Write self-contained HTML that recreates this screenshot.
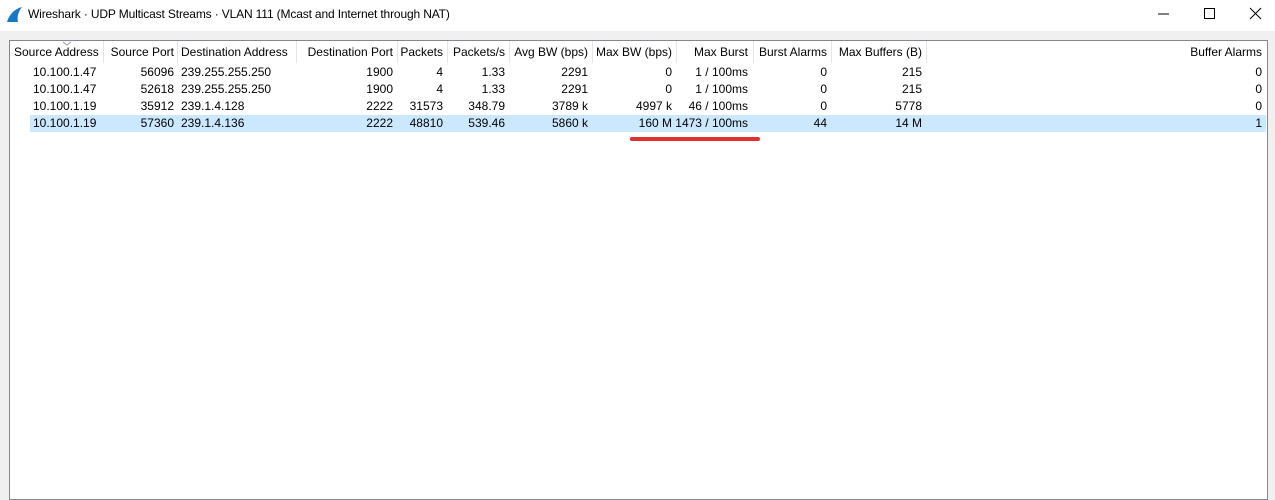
<!DOCTYPE html>
<html><head><style>
*{margin:0;padding:0;box-sizing:border-box}
body{width:1275px;height:475px;background:#f0f0f0;font-family:"Liberation Sans",sans-serif;font-size:12px;color:#000;position:relative;overflow:hidden}
#title{position:absolute;left:0;top:0;width:1275px;height:31px;background:#fff}
#title .t{position:absolute;left:28px;top:7px;font-size:12px;letter-spacing:-0.15px}
#box{position:absolute;left:9px;top:40px;width:1259px;height:460px;background:#fff;border:1px solid #828790}
.c{position:absolute;white-space:nowrap;line-height:17px}
.sep{position:absolute;top:0;width:1px;height:22px;background:#e5e5e5}
.r{text-align:right}
#sel{position:absolute;left:20px;top:74px;width:1236px;height:17px;background:#cce8ff}
</style></head><body>
<div id="title">
<svg style="position:absolute;left:6px;top:6px" width="18" height="18" viewBox="0 0 18 18"><path d="M1 16 C3 9 8 3 16 1 C12 6 11 11 12 16 Z" fill="#1679c4"/></svg>
<div class="t">Wireshark · UDP Multicast Streams · VLAN 111 (Mcast and Internet through NAT)</div>
<svg style="position:absolute;left:1155px;top:6px" width="110" height="16"><line x1="3" y1="8" x2="14" y2="8" stroke="#000"/><rect x="49.5" y="2.5" width="10" height="10" fill="none" stroke="#000"/><path d="M95 2 L106 13 M106 2 L95 13" stroke="#000"/></svg>
</div>
<div id="box">
<div id="sel"></div>
<svg style="position:absolute;left:52px;top:0" width="10" height="6"><path d="M1 1 L5 4 L9 1" stroke="#999" fill="none"/></svg>
<div class="sep" style="left:93px"></div><div class="sep" style="left:167px"></div><div class="sep" style="left:286px"></div><div class="sep" style="left:387px"></div><div class="sep" style="left:437px"></div><div class="sep" style="left:499px"></div><div class="sep" style="left:582px"></div><div class="sep" style="left:666px"></div><div class="sep" style="left:743px"></div><div class="sep" style="left:821px"></div><div class="sep" style="left:916px"></div>
<div id="rows"></div>
</div>
<div style="position:absolute;left:630px;top:137px;width:130px;height:4px;border-radius:2px;background:#e0312f"></div>
<script>
var cols=[[4,0,'l'],[0,164,'r'],[171,0,'l'],[0,383,'r'],[0,433,'r'],[0,495,'r'],[0,578,'r'],[0,662,'r'],[0,738,'r'],[0,817,'r'],[0,912,'r'],[0,1252,'r']];
var hdr=['Source Address','Source Port','Destination Address','Destination Port','Packets','Packets/s','Avg BW (bps)','Max BW (bps)','Max Burst','Burst Alarms','Max Buffers (B)','Buffer Alarms'];
var data=[
['10.100.1.47','56096','239.255.255.250','1900','4','1.33','2291','0','1 / 100ms','0','215','0'],
['10.100.1.47','52618','239.255.255.250','1900','4','1.33','2291','0','1 / 100ms','0','215','0'],
['10.100.1.19','35912','239.1.4.128','2222','31573','348.79','3789 k','4997 k','46 / 100ms','0','5778','0'],
['10.100.1.19','57360','239.1.4.136','2222','48810','539.46','5860 k','160 M','1473 / 100ms','44','14 M','1']];
var h='';
function cell(t,i,y,ind){var c=cols[i];if(c[2]=='l')return '<div class="c" style="left:'+(c[0]+(i==0?ind:0))+'px;top:'+y+'px">'+t+'</div>';return '<div class="c r" style="right:'+(1257-c[1])+'px;top:'+y+'px">'+t+'</div>';}
hdr.forEach(function(t,i){h+=cell(t,i,3,0)});
data.forEach(function(r,j){r.forEach(function(t,i){h+=cell(t,i,23+j*17,19)})});
document.getElementById('rows').innerHTML=h;
</script>
</body></html>
